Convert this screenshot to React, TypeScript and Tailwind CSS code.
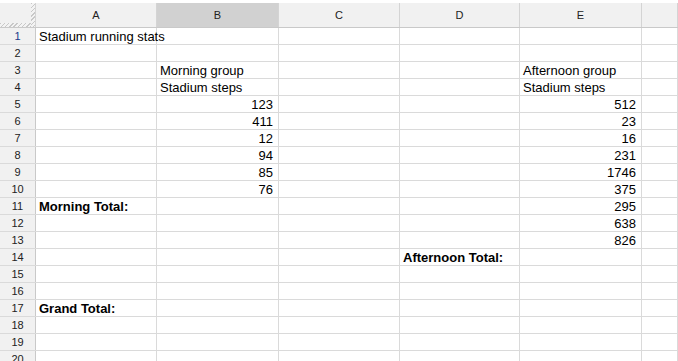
import React from 'react'

const COLS = ['A', 'B', 'C', 'D', 'E', '']
const WIDTHS = ['w-[121px]', 'w-[122px]', 'w-[121px]', 'w-[120px]', 'w-[122px]', 'flex-1']

type Cell = { text: string; align?: 'left' | 'right'; bold?: boolean }

const data: Record<number, Record<number, Cell>> = {
  1: { 0: { text: 'Stadium running stats' } },
  3: { 1: { text: 'Morning group' }, 4: { text: 'Afternoon group' } },
  4: { 1: { text: 'Stadium steps' }, 4: { text: 'Stadium steps' } },
  5: { 1: { text: '123', align: 'right' }, 4: { text: '512', align: 'right' } },
  6: { 1: { text: '411', align: 'right' }, 4: { text: '23', align: 'right' } },
  7: { 1: { text: '12', align: 'right' }, 4: { text: '16', align: 'right' } },
  8: { 1: { text: '94', align: 'right' }, 4: { text: '231', align: 'right' } },
  9: { 1: { text: '85', align: 'right' }, 4: { text: '1746', align: 'right' } },
  10: { 1: { text: '76', align: 'right' }, 4: { text: '375', align: 'right' } },
  11: { 0: { text: 'Morning Total:', bold: true }, 4: { text: '295', align: 'right' } },
  12: { 4: { text: '638', align: 'right' } },
  13: { 4: { text: '826', align: 'right' } },
  14: { 3: { text: 'Afternoon Total:', bold: true } },
  17: { 0: { text: 'Grand Total:', bold: true } },
}

const hatch =
  'bg-[repeating-linear-gradient(135deg,#c8c8c8_0px,#c8c8c8_1px,#f3f3f3_1px,#f3f3f3_3px)]'

export default function App() {
  const rows = Array.from({ length: 20 }, (_, i) => i + 1)

  return (
    <div className="w-[678px] h-[361px] overflow-hidden bg-white pt-[3px] font-['Liberation_Sans',Arial,sans-serif] text-[13px] text-black">
      {/* column headers */}
      <div className="flex h-[25px] border-b border-[#c9c9c9] bg-[#f1f1f1]">
        <div className="relative w-[36px] shrink-0 border-r border-[#d4d4d4]">
          <div className={`absolute left-0 right-0 bottom-0 h-[4px] ${hatch}`} />
          <div className={`absolute top-0 right-0 bottom-0 w-[4px] ${hatch}`} />
        </div>
        {COLS.map((c, i) => (
          <div
            key={i}
            className={`${WIDTHS[i]} shrink-0 flex items-center justify-center border-r border-[#d4d4d4] text-[11px] ${
              c === 'B' ? 'bg-[#d1d1d1] text-[#222]' : 'text-[#222]'
            }`}
          >
            {c}
          </div>
        ))}
      </div>

      {rows.map((r) => (
        <div key={r} className="flex h-[17px] border-b border-[#dadada]">
          <div
            className={`w-[36px] shrink-0 bg-[#f1f1f1] border-r border-[#c9c9c9] flex items-center justify-center text-[11px] ${
              r === 1 ? 'text-[#1a3a8a]' : 'text-[#222]'
            }`}
          >
            {r}
          </div>
          {COLS.map((_, i) => {
            const cell = data[r]?.[i]
            return (
              <div
                key={i}
                className={`${WIDTHS[i]} shrink-0 border-r border-[#dadada] flex items-center whitespace-nowrap px-[3px] leading-none ${
                  cell?.align === 'right' ? 'justify-end pr-[5px]' : 'justify-start'
                } ${cell?.bold ? 'font-bold' : ''} ${i === 0 && r === 1 ? 'overflow-visible' : 'overflow-hidden'}`}
              >
                {cell?.text}
              </div>
            )
          })}
        </div>
      ))}
    </div>
  )
}
